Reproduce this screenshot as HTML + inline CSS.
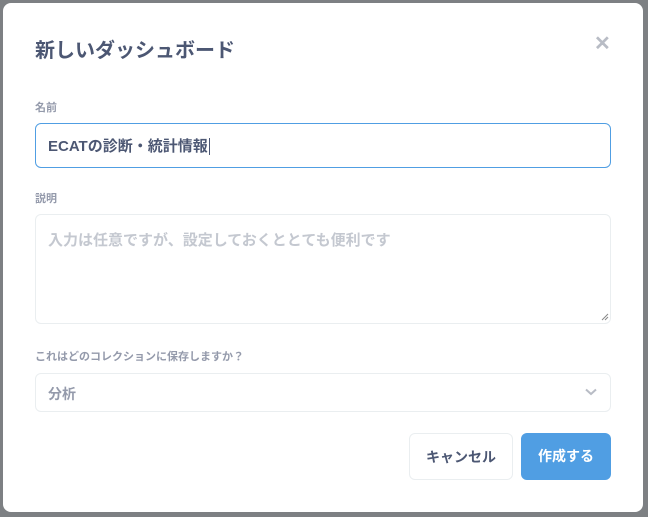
<!DOCTYPE html>
<html><head><meta charset="utf-8"><style>
body{margin:0;width:648px;height:517px;background:#7d8083;font-family:"Liberation Sans","Noto Sans CJK JP",sans-serif;position:relative;overflow:hidden}
.m{position:absolute;left:3px;top:3px;width:640px;height:509px;background:#fff;border-radius:8px}
.a{position:absolute}
.t{left:35px;top:34px;font-size:20px;font-weight:bold;color:#4c5773}
.x{left:594px;top:31px;font-size:20px;font-weight:bold;color:#b8bcc5}
.l{font-size:11px;font-weight:bold;color:#949aab;left:35px}
.box{left:35px;width:576px;border:1px solid #eaeef0;border-radius:6px;box-sizing:border-box}
.btn{border-radius:6px;box-sizing:border-box;font-size:14px;font-weight:bold;text-align:center;line-height:46px;height:47px;top:433px}
</style></head><body>
<div class="m"></div>
<div class="a t">新しいダッシュボード</div>
<div class="a x">✕</div>
<div class="a l" style="top:99px">名前</div>
<div class="a box" style="top:123px;height:45px;border-color:#509ee3;font-size:15px;font-weight:bold;color:#4c5773;padding:11px 12px">ECATの診断・統計情報<span style="border-left:1px solid #4c5773;margin-left:1px"></span></div>
<div class="a l" style="top:190px">説明</div>
<div class="a box" style="top:214px;height:110px;font-size:15px;font-weight:bold;color:#c4c8d0;padding:14px 12px">入力は任意ですが、設定しておくととても便利です
<svg class="a" style="left:565px;top:98px" width="8" height="8" viewBox="0 0 8 8"><path d="M7 1L1 7M7 4L4 7" stroke="#888" stroke-width="1"/></svg></div>
<div class="a l" style="top:348px">これはどのコレクションに保存しますか？</div>
<div class="a box" style="top:373px;height:39px;font-size:14px;font-weight:bold;color:#949aab;padding:10px 12px">分析
<svg class="a" style="left:549px;top:14px" width="12" height="8" viewBox="0 0 12 8"><path d="M1 1.5L6 6l5-4.5" stroke="#b8bcc5" stroke-width="2" fill="none"/></svg></div>
<div class="a btn" style="left:409px;width:104px;border:1px solid #eaeef0;color:#4c5773">キャンセル</div>
<div class="a btn" style="left:521px;width:90px;background:#509ee3;color:#fff">作成する</div>
</body></html>
